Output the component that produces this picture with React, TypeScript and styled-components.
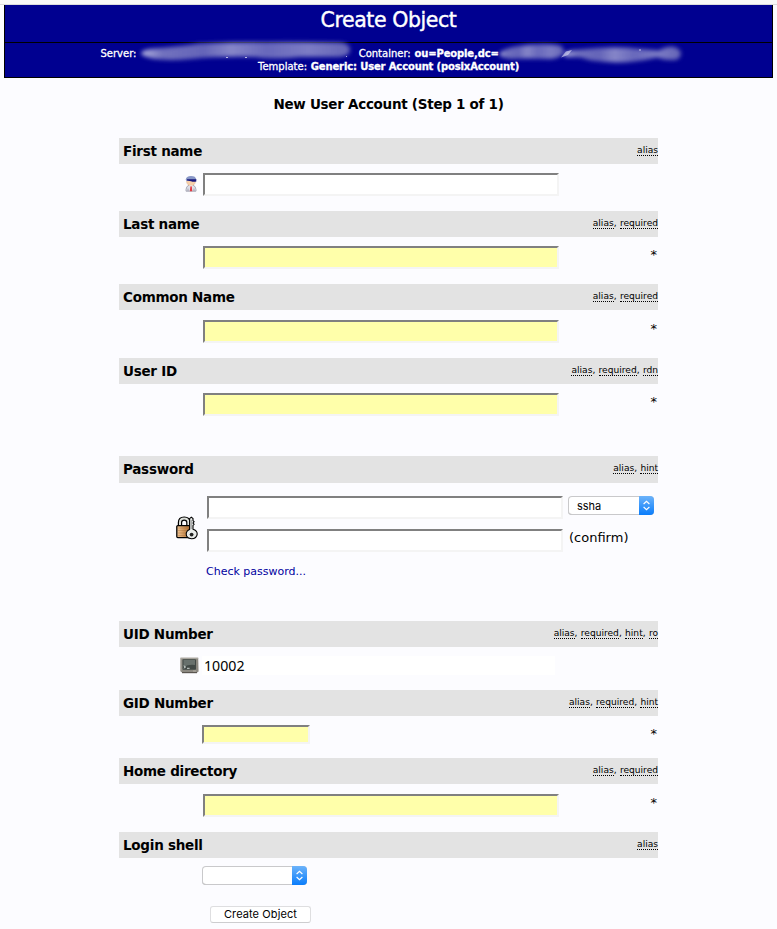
import React from 'react';
import styled, { createGlobalStyle } from 'styled-components';

const GlobalStyle = createGlobalStyle`
  * { box-sizing: border-box; }
  html, body { margin: 0; background: #fcfcff; }
  body {
    font-family: 'DejaVu Sans', Verdana, sans-serif;
    font-size: 13px;
    color: #000;
    overflow: hidden;
  }
`;

const Page = styled.div`
  height: 929px;
  overflow: hidden;
`;

const TopStrip = styled.div`
  height: 5px;
  background: #f8f8f8;
  border-bottom: 1px solid #dcdcdc;
`;

const Banner = styled.header`
  margin: 0 4px;
  height: 73px;
  background: #000090;
  border: 1px solid #000;
  border-top: 0;
  color: #fff;
`;

const Title = styled.h1`
  margin: 0;
  height: 38px;
  border-bottom: 1px solid #000;
  font-size: 20.5px;
  font-weight: 400;
  line-height: 30px;
  letter-spacing: -0.43px;
  text-align: center;
  -webkit-text-stroke: 0.4px #fff;
`;

const InfoLine = styled.div<{ $indent: number }>`
  display: flex;
  height: 13px;
  padding-left: ${(p) => p.$indent}px;
  font-size: 10px;
  line-height: 13px;
  white-space: pre;
  -webkit-text-stroke: 0.3px #fff;
  &:first-of-type { margin-top: 4px; }
`;

const Value = styled.b<{ $width?: number }>`
  width: ${(p) => (p.$width ? `${p.$width}px` : 'auto')};
  margin-left: 0.6px;
  letter-spacing: -0.14px;
`;

const Smudge = styled.svg`
  flex: none;
  height: 24px;
  margin-top: -6px;
  overflow: visible;
`;

const StepTitle = styled.h2`
  margin: 0;
  height: 60px;
  padding-top: 17px;
  font-size: 13.5px;
  line-height: 19px;
  letter-spacing: -0.28px;
  text-align: center;
`;

const Form = styled.form`
  width: 539px;
  margin-left: 119px;
`;

const Section = styled.section<{ $height: number }>`
  height: ${(p) => p.$height}px;
`;

const SectionBar = styled.div<{ $tall?: boolean }>`
  display: flex;
  justify-content: space-between;
  height: ${(p) => (p.$tall ? 27 : 26)}px;
  padding-left: 4px;
  background: #e3e3e3;
`;

const SectionName = styled.h3`
  margin: 0;
  font-size: 13.5px;
  line-height: 27px;
  letter-spacing: -0.26px;
`;

const Notes = styled.div`
  font-size: 9.1px;
  line-height: 24px;
`;

const Note = styled.abbr`
  display: inline-block;
  height: 11px;
  line-height: 11px;
  border-bottom: 1px dotted #000;
  text-decoration: none;
`;

const NoteGap = styled.span`
  letter-spacing: 0.2px;
`;

const FieldRow = styled.div<{ $top: number }>`
  display: flex;
  align-items: flex-start;
  padding-top: ${(p) => p.$top}px;
`;

const IconCell = styled.div<{ $width: number; $top?: number; $gap: number }>`
  display: flex;
  justify-content: flex-end;
  flex: none;
  width: ${(p) => p.$width}px;
  padding: ${(p) => p.$top ?? 0}px ${(p) => p.$gap}px 0 0;
`;

const TextInput = styled.input<{ $required?: boolean; $small?: boolean }>`
  flex: none;
  width: ${(p) => (p.$small ? 108 : 356)}px;
  height: ${(p) => (p.$small ? 19 : 23)}px;
  padding: 1px;
  border: solid;
  border-width: 2px;
  border-color: #808080 #f4f4f4 #f4f4f4 #808080;
  border-radius: 0;
  outline: 0;
  background: ${(p) => (p.$required ? '#ffffaa' : '#fff')};
`;

const ReadOnlyInput = styled.input`
  width: 353px;
  height: 19px;
  padding: 0 2px;
  border: 0;
  outline: 0;
  background: #fff;
  font: 14.2px/19px 'Noto Sans', sans-serif;
`;

const Star = styled.span`
  margin-left: auto;
  padding-right: 1px;
  font-size: 13px;
  line-height: 17px;
`;

const PasswordStack = styled.div`
  display: flex;
  flex-direction: column;
  gap: 10px;
`;

const PasswordLine = styled.div`
  display: flex;
  align-items: flex-start;
  height: 23px;
`;

const Confirm = styled.span`
  margin-left: 6px;
  line-height: 18px;
`;

const CheckLink = styled.a`
  margin-left: -1px;
  font-size: 11px;
  line-height: 20px;
  color: #0000a0;
  text-decoration: none;
`;

const SelectBox = styled.div<{ $width: number; $offset?: number }>`
  display: flex;
  width: ${(p) => p.$width}px;
  height: 19px;
  margin-left: ${(p) => p.$offset ?? 0}px;
  border-radius: 4px;
  background: #fff;
  box-shadow: inset 0 0 0 1px #c9c9cb, inset 0 -1px 0 #b4b4b6;
`;

const NativeSelect = styled.select`
  appearance: none;
  flex: 1;
  min-width: 0;
  padding: 0 0 0 9px;
  border: 0;
  outline: 0;
  background: transparent;
  font: 11px/18px Inter, sans-serif;
  color: #000;
`;

const SelectCap = styled.span`
  display: flex;
  align-items: center;
  justify-content: center;
  width: 15px;
  border-radius: 0 4px 4px 0;
  background: linear-gradient(#6cb3fa, #0a7dfb);
`;

const SubmitButton = styled.button`
  display: block;
  width: 101px;
  height: 17px;
  margin: 21px 0 0 91px;
  padding: 0;
  border: 1px solid #dedee0;
  border-bottom-color: #cdcdcf;
  border-radius: 3px;
  background: #fff;
  font: 11px/15px Inter, sans-serif;
  letter-spacing: 0.1px;
  color: #000;
`;

const PersonIcon = () => (
  <svg width="12" height="17" viewBox="0 0 12 17">
    <path d="M1 16.2v-1.7Q1.3 11 4 10.2h4q2.7.8 3 4.3v1.7z" fill="#dfe0e8" stroke="#9a9cab" strokeWidth=".8" />
    <ellipse cx="6" cy="6.6" rx="4.4" ry="4.1" fill="#f6cfaa" stroke="#d9ad8c" strokeWidth=".5" />
    <path d="M.8 4.6Q1.2 1 6 1t5.2 3.4l-.4 1.4H1.2z" fill="#8796c6" />
    <path d="M2 4.2h9.3v2.2Q8.5 7.2 6 6.2L2 5.6z" fill="#18187d" />
    <path d="M4 10.4l2 1.9 2-1.9" fill="#fff" />
    <path d="M5.4 11.3h1.3l.6 4.9H4.8z" fill="#e23a42" />
    <path d="M3 13.6v2.6M9 13.6v2.6" stroke="#8b8e9d" strokeWidth=".7" />
  </svg>
);

const LockIcon = () => (
  <svg width="22" height="24" viewBox="0 0 22 24">
    <defs>
      <linearGradient id="brass">
        <stop offset="0" stopColor="#f3c99a" />
        <stop offset=".5" stopColor="#cf9559" />
        <stop offset="1" stopColor="#a5672d" />
      </linearGradient>
    </defs>
    <path d="M4 10V6.4Q4 2.6 8.2 2.6t4.2 3.8V10" fill="none" stroke="#000" strokeWidth="4.4" />
    <path d="M4 10V6.4Q4 2.6 8.2 2.6t4.2 3.8V10" fill="none" stroke="#dfe2dd" strokeWidth="2" />
    <rect x=".8" y="9.6" width="14.5" height="12" rx="1" fill="url(#brass)" stroke="#000" strokeWidth="1.3" />
    <path d="M2 12h12M2 14.5h9M2 17h8M2 19.5h9" stroke="#8d5a2c" strokeWidth=".6" opacity=".5" />
    <path d="M13.6 2.6l1.7-1.4 1.7 1.4v2l1.1 1.2-1.1 1.2 1.1 1.3L17 9.5v3.7q4.2 1.2 4.2 4.9-.5 4.6-5.6 4.7-5.3-.3-5.4-4.7.1-3.6 3.4-4.7z" fill="#e9ecea" stroke="#000" strokeWidth="1.1" />
    <path d="M15.2 4v9" stroke="#888" strokeWidth=".9" />
    <circle cx="15.6" cy="18.6" r="1.9" fill="#222" />
  </svg>
);

const TerminalIcon = () => (
  <svg width="19" height="17" viewBox="0 0 19 17">
    <path d="M.5.7h17.7l.4 13.7-1.4 1.2H2L.4 14.2z" fill="#8b8880" />
    <path d="M.5.7h17.7v1H1.4v12H.4z" fill="#b2aea6" />
    <rect x="2.5" y="2.2" width="13.5" height="10.6" rx=".8" fill="#414946" />
    <path d="M3.5 3h11.5v5q-6-1-11.5 2z" fill="#68716d" />
    <path d="M3.8 8.8l1.8 1.2-1.8 1.2M7 11.3h2.6" fill="none" stroke="#e1e8e4" strokeWidth=".9" />
    <path d="M2 15h15v1.2H2z" fill="#5a554f" />
    <path d="M13 14h3" stroke="#c5c0b6" strokeWidth=".7" />
  </svg>
);

const Select = ({ width, offset, value }: { width: number; offset?: number; value: string }) => (
  <SelectBox $width={width} $offset={offset}>
    <NativeSelect defaultValue={value}>
      <option value={value}>{value}</option>
    </NativeSelect>
    <SelectCap>
      <svg width="9" height="11" viewBox="0 0 9 11" fill="none" stroke="#fff" strokeWidth="1.2">
        <path d="M1.6 4L4.5 1.4 7.4 4M1.6 7l2.9 2.6L7.4 7" />
      </svg>
    </SelectCap>
  </SelectBox>
);

const Bar = ({ name, notes, tall }: { name: string; notes: string[]; tall?: boolean }) => (
  <SectionBar $tall={tall}>
    <SectionName>{name}</SectionName>
    <Notes>
      {notes.map((n, i) => (
        <React.Fragment key={n}>
          {i > 0 && <NoteGap>, </NoteGap>}
          <Note>{n}</Note>
        </React.Fragment>
      ))}
    </Notes>
  </SectionBar>
);

const RequiredField = ({ name, notes, height, top = 9 }: { name: string; notes: string[]; height: number; top?: number }) => (
  <Section $height={height}>
    <Bar name={name} notes={notes} />
    <FieldRow $top={top}>
      <IconCell $width={84} $gap={0} />
      <TextInput $required />
      <Star>*</Star>
    </FieldRow>
  </Section>
);

export default function App() {
  return (
    <>
      <GlobalStyle />
      <Page>
        <TopStrip />
        <Banner>
          <Title>Create Object</Title>
          <InfoLine $indent={95.5}>
            <span>Server: </span>
            <Smudge width="219">
              <defs>
                <filter id="soft" x="-10%" y="-40%" width="120%" height="180%">
                  <feGaussianBlur stdDeviation="1.9" />
                </filter>
                <linearGradient id="haze">
                  <stop offset="0" stopColor="#b4b4e0" />
                  <stop offset=".1" stopColor="#7272be" />
                  <stop offset=".3" stopColor="#6464b8" />
                  <stop offset=".43" stopColor="#8686c8" />
                  <stop offset=".6" stopColor="#6868bb" />
                  <stop offset=".8" stopColor="#7c7cc4" />
                  <stop offset="1" stopColor="#6464b6" />
                </linearGradient>
              </defs>
              <path d="M1 12Q3 8 16 7.5Q45 5 60 2.5Q130 0 200 1.5Q210 2 210 9Q210 15 199 16L160 16Q132 19 115 16Q80 15 50 18Q15 21 2 14z" fill="url(#haze)" filter="url(#soft)" />
              <path d="M86 16.5h2M105 16.5h2M206 15.5h1" stroke="#dedef5" opacity=".8" />
            </Smudge>
            <span>Container: </span>
            <Value $width={84}>ou=People,dc=</Value>
            <Smudge width="184">
              <path d="M0 13Q3 8 20 5Q40 2 58 4Q65 5 65 11Q63 17 51 18Q25 17 12 18Q2 17 0 13z" fill="url(#haze)" filter="url(#soft)" />
              <path d="M65 13Q67 9 83 8.5Q113 5 142 8L160 9.5Q168 5 175 6Q182 8 182 13Q181 19 174 19Q165 19 158 16.5Q129 23 108 21Q90 20 82 16.5L66 16z" fill="url(#haze)" filter="url(#soft)" />
              <path d="M62 16.5l5-6 6-1.5-4 5z" fill="#d0d0f0" opacity=".7" />
              <path d="M140 9h2" stroke="#e0e0f8" opacity=".8" />
            </Smudge>
          </InfoLine>
          <InfoLine $indent={253}>
            <span>Template: </span>
            <Value>Generic: User Account (posixAccount)</Value>
          </InfoLine>
        </Banner>
        <StepTitle>New User Account (Step 1 of 1)</StepTitle>
        <Form onSubmit={(e) => e.preventDefault()}>
          <Section $height={73}>
            <Bar name="First name" notes={['alias']} />
            <FieldRow $top={9}>
              <IconCell $width={84} $top={2} $gap={6}><PersonIcon /></IconCell>
              <TextInput />
            </FieldRow>
          </Section>
          <RequiredField name="Last name" notes={['alias', 'required']} height={73} />
          <RequiredField name="Common Name" notes={['alias', 'required']} height={74} top={10} />
          <RequiredField name="User ID" notes={['alias', 'required', 'rdn']} height={98} />
          <Section $height={165}>
            <Bar name="Password" notes={['alias', 'hint']} tall />
            <FieldRow $top={13}>
              <IconCell $width={88} $top={20} $gap={9}><LockIcon /></IconCell>
              <PasswordStack>
                <PasswordLine>
                  <TextInput type="password" />
                  <Select width={86} offset={5} value="ssha" />
                </PasswordLine>
                <PasswordLine>
                  <TextInput type="password" />
                  <Confirm>(confirm)</Confirm>
                </PasswordLine>
                <CheckLink href="#">Check password...</CheckLink>
              </PasswordStack>
            </FieldRow>
          </Section>
          <Section $height={69}>
            <Bar name="UID Number" notes={['alias', 'required', 'hint', 'ro']} />
            <FieldRow $top={9}>
              <IconCell $width={83} $top={1} $gap={3}><TerminalIcon /></IconCell>
              <ReadOnlyInput readOnly value="10002" />
            </FieldRow>
          </Section>
          <Section $height={68}>
            <Bar name="GID Number" notes={['alias', 'required', 'hint']} />
            <FieldRow $top={9}>
              <IconCell $width={83} $gap={0} />
              <TextInput $required $small />
              <Star>*</Star>
            </FieldRow>
          </Section>
          <RequiredField name="Home directory" notes={['alias', 'required']} height={74} top={10} />
          <Section $height={97}>
            <Bar name="Login shell" notes={['alias']} />
            <FieldRow $top={8}>
              <IconCell $width={83} $gap={0} />
              <Select width={105} value="" />
            </FieldRow>
            <SubmitButton type="submit">Create Object</SubmitButton>
          </Section>
        </Form>
      </Page>
    </>
  );
}
